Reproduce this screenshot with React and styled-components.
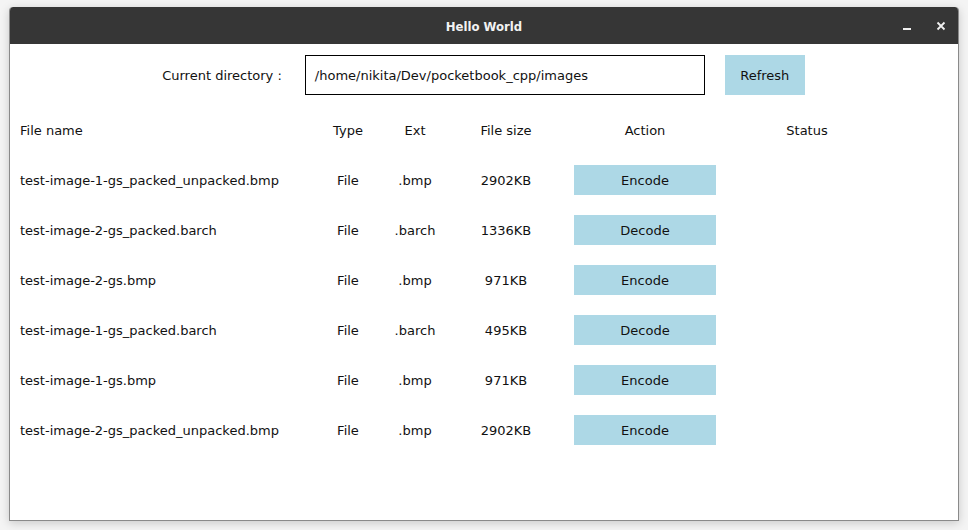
import React from "react";
import styled, { createGlobalStyle } from "styled-components";

const Global = createGlobalStyle`
  html, body { margin: 0; padding: 0; background: #f4f4f4; }
  body { font-family: "DejaVu Sans", "Liberation Sans", sans-serif; }
`;

const Stage = styled.div`
  width: 968px;
  height: 530px;
  padding: 7px 0 0 9px;
  box-sizing: border-box;
`;

const Window = styled.div`
  width: 950px;
  height: 514px;
  box-sizing: border-box;
  background: #ffffff;
  border: 1px solid #8a8a8a;
  border-top: none;
  border-radius: 4px 4px 0 0;
  box-shadow: 0 2px 10px rgba(0, 0, 0, 0.18);
  display: flex;
  flex-direction: column;
  overflow: hidden;
`;

const TitleBar = styled.div`
  height: 37px;
  margin: 0 -1px;
  background: #363636;
  border-radius: 4px 4px 0 0;
  display: flex;
  align-items: center;
  justify-content: center;
  position: relative;
  flex-shrink: 0;
`;

const Title = styled.div`
  color: #f2f2f2;
  font-family: "DejaVu Sans Condensed", "DejaVu Sans", sans-serif;
  font-weight: bold;
  font-size: 13px;
  margin-top: 1px;
`;

const Controls = styled.div`
  position: absolute;
  right: 13px;
  top: 0;
  height: 100%;
  display: flex;
  align-items: center;
  gap: 24px;
`;

const Content = styled.div`
  display: flex;
  flex-direction: column;
  padding-top: 11px;
  color: #111;
  font-size: 13px;
`;

const DirBar = styled.div`
  display: flex;
  align-items: center;
  justify-content: center;
  height: 40px;
  padding-right: 1px;
`;

const DirLabel = styled.span`
  margin-right: 23px;
`;

const DirInput = styled.div`
  width: 400px;
  height: 40px;
  box-sizing: border-box;
  border: 1px solid #000;
  display: flex;
  align-items: center;
  padding-left: 9px;
`;

const BlueButton = styled.div`
  background: #add8e6;
  width: ${(p) => p.$w}px;
  height: ${(p) => p.$h}px;
  display: flex;
  align-items: center;
  justify-content: center;
  margin-left: ${(p) => p.$ml || 0}px;
`;

const Table = styled.div`
  display: flex;
  flex-direction: column;
  margin-top: 10px;
`;

const Row = styled.div`
  display: grid;
  grid-template-columns: 308px 60px 74px 108px 170px 154px;
  height: 50px;
  align-items: center;
`;

const Cell = styled.div`
  padding-left: ${(p) => (p.$left ? "10px" : "0")};
  display: flex;
  justify-content: ${(p) => (p.$left ? "flex-start" : "center")};
  white-space: nowrap;
`;

const files = [
  ["test-image-1-gs_packed_unpacked.bmp", ".bmp", "2902KB", "Encode"],
  ["test-image-2-gs_packed.barch", ".barch", "1336KB", "Decode"],
  ["test-image-2-gs.bmp", ".bmp", "971KB", "Encode"],
  ["test-image-1-gs_packed.barch", ".barch", "495KB", "Decode"],
  ["test-image-1-gs.bmp", ".bmp", "971KB", "Encode"],
  ["test-image-2-gs_packed_unpacked.bmp", ".bmp", "2902KB", "Encode"],
];

export default function App() {
  return (
    <Stage>
      <Global />
      <Window>
        <TitleBar>
          <Title>Hello World</Title>
          <Controls>
            <svg width="10" height="10" viewBox="0 0 10 10">
              <rect x="1" y="7" width="8" height="2" fill="#f0f0f0" />
            </svg>
            <svg width="10" height="10" viewBox="0 0 10 10">
              <path d="M1.5 1.5 L8.5 8.5 M8.5 1.5 L1.5 8.5" stroke="#f0f0f0" strokeWidth="1.8" />
            </svg>
          </Controls>
        </TitleBar>
        <Content>
          <DirBar>
            <DirLabel>Current directory :</DirLabel>
            <DirInput>/home/nikita/Dev/pocketbook_cpp/images</DirInput>
            <BlueButton $w={80} $h={40} $ml={20}>Refresh</BlueButton>
          </DirBar>
          <Table>
            <Row>
              <Cell $left>File name</Cell>
              <Cell>Type</Cell>
              <Cell>Ext</Cell>
              <Cell>File size</Cell>
              <Cell>Action</Cell>
              <Cell>Status</Cell>
            </Row>
            {files.map(([name, ext, size, action]) => (
              <Row key={name}>
                <Cell $left>{name}</Cell>
                <Cell>File</Cell>
                <Cell>{ext}</Cell>
                <Cell>{size}</Cell>
                <Cell>
                  <BlueButton $w={142} $h={30}>{action}</BlueButton>
                </Cell>
                <Cell></Cell>
              </Row>
            ))}
          </Table>
        </Content>
      </Window>
    </Stage>
  );
}
